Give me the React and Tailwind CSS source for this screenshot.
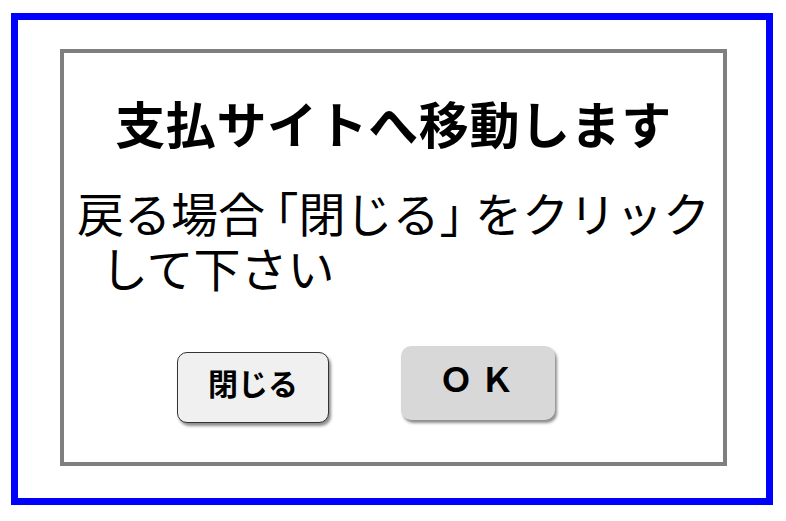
const jp = "font-['Noto_Sans_CJK_JP','Noto_Sans',sans-serif]";

const App = () => {
  return (
    <div className={`w-[786px] h-[521px] bg-white pl-[11px] pt-[13px] ${jp}`}>
      <div className="w-[762px] h-[492px] border-[7px] border-[#0000ff] pl-[42px] pt-[29px]">
        <div className="w-[667px] h-[417px] border-4 border-[#7f7f7f] flex flex-col">
          <h1 className="mt-[39px] text-center text-[50px] leading-[60px] font-bold tracking-[0.6px] text-black">
            支払サイトへ移動します
          </h1>

          {/* half-width brackets, spaced out a little */}
          <div className="mt-[32px] pl-[13px] text-[47px] leading-[55px] text-black">
            <div className="h-[55px]">
              戻る場合<span className="ml-[10px] [font-feature-settings:'halt']">「</span>閉じる<span className="mr-[12px] [font-feature-settings:'halt']">」</span>をクリック
            </div>
            <div className="h-[55px] pl-[24px]">して下さい</div>
          </div>

          <div className="mt-[52px] pl-[113px] flex items-start gap-[72px]">
            <button className="mt-[6px] w-[152px] h-[71px] rounded-[10px] border border-[#333] bg-[#f0f0f0] shadow-[2px_3px_3px_rgba(0,0,0,0.45)] text-[30px] font-bold text-black pb-[10px]">
              閉じる
            </button>
            <button className="w-[154px] h-[74px] rounded-[10px] bg-[#d8d8d8] shadow-[2px_3px_3px_rgba(0,0,0,0.45)] text-[34px] font-bold text-black pb-[12px] tracking-[7px] pl-[4px]">
              ＯＫ
            </button>
          </div>
        </div>
      </div>
    </div>
  );
};

export default App;
